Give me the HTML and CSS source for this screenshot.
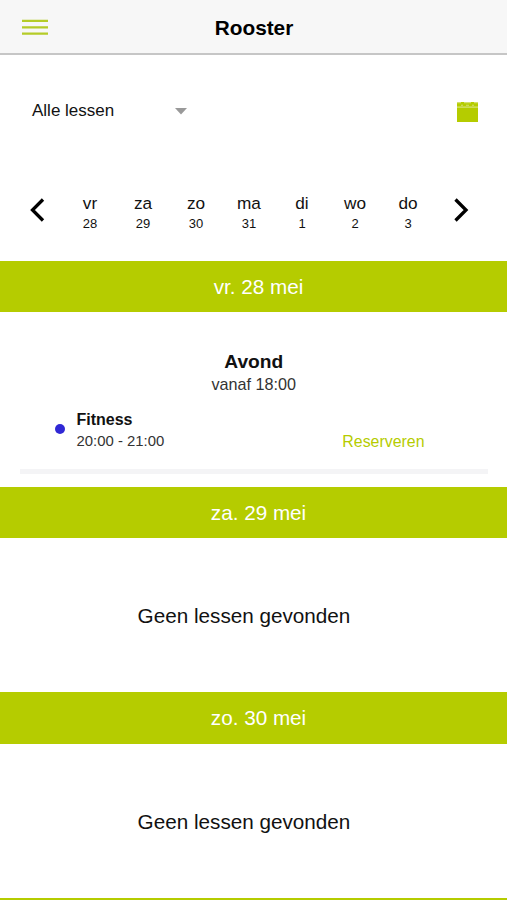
FILE: index.html
```html
<!DOCTYPE html>
<html lang="nl">
<head>
<meta charset="utf-8">
<title>Rooster</title>
<link rel="stylesheet" href="styles.css">
</head>
<body>
<header class="topbar">
  <svg class="menu" width="26" height="17" viewBox="0 0 26 17"><path d="M0 1.9h26M0 8.3h26M0 14.7h26" stroke="#b5cc28" stroke-width="2.2"/></svg>
  <h1>Rooster</h1>
</header>
<div class="filter">
  <span class="filter-label">Alle lessen</span>
  <svg class="caret" width="12" height="7" viewBox="0 0 12 7"><path d="M0 0h12L6 6.5z" fill="#999"/></svg>
  <svg class="calendar" width="21" height="20" viewBox="0 0 21 20"><path d="M0 0h21v20H0z" fill="#b5cc00"/><path d="M0 5.1h21" stroke="#dce68a" stroke-width="1.1"/><path d="M0 .6h4M7 .6h7M17 .6h4M4 3.2h2M9 3.2h3M15 3.2h2" stroke="#d3df70" stroke-width="1.1"/></svg>
</div>
<nav class="week">
  <svg class="arrow" width="16" height="24" viewBox="0 0 16 24"><path d="M14 1.5L3.500 12 14 22.500" fill="none" stroke="#000" stroke-width="3.300"/></svg>
  <div class="days">
    <div class="day"><span>vr</span><small>28</small></div>
    <div class="day"><span>za</span><small>29</small></div>
    <div class="day"><span>zo</span><small>30</small></div>
    <div class="day"><span>ma</span><small>31</small></div>
    <div class="day"><span>di</span><small>1</small></div>
    <div class="day"><span>wo</span><small>2</small></div>
    <div class="day"><span>do</span><small>3</small></div>
  </div>
  <svg class="arrow" width="16" height="24" viewBox="0 0 16 24"><path d="M2.500 1.500L13 12 2.500 22.500" fill="none" stroke="#000" stroke-width="3.300"/></svg>
</nav>
<main>
  <h2 class="date">vr. 28 mei</h2>
  <section class="lessons">
    <h3>Avond</h3>
    <p class="from">vanaf 18:00</p>
    <div class="lesson">
      <span class="dot"></span>
      <div class="info"><strong>Fitness</strong><span>20:00 - 21:00</span></div>
      <a class="reserve">Reserveren</a>
    </div>
  </section>
  <h2 class="date">za. 29 mei</h2>
  <p class="empty">Geen lessen gevonden</p>
  <h2 class="date">zo. 30 mei</h2>
  <p class="empty">Geen lessen gevonden</p>
  <div class="next-date"></div>
</main>
</body>
</html>
```
FILE: styles.css
```css
* { box-sizing: border-box; margin: 0; padding: 0; }
body {
  height: 900px;
  overflow: hidden;
  background: #fff;
  color: #111;
  font-family: "Liberation Sans", Arial, sans-serif;
}
.topbar {
  display: grid;
  grid-template-columns: 48px 1fr 48px;
  align-items: center;
  height: 55px;
  background: #f7f7f7;
  border-bottom: 2px solid #c6c6c6;
}
.menu { margin: 2px 0 0 22px; }
.topbar h1 { padding: 2px 0 0 1px; text-align: center; font-size: 20.8px; line-height: 24px; color: #000; }
.filter { display: flex; align-items: center; height: 112px; padding: 0 29px 0 32px; }
.filter-label { width: 142px; font-size: 17px; line-height: 20px; }
.caret { margin-left: 0.5px; }
.calendar { margin-left: auto; margin-top: 2px; }
.week { display: flex; justify-content: space-between; height: 94px; padding: 25px 38px 0 29px; }
.arrow { margin-top: 6px; }
.days { display: grid; grid-template-columns: repeat(7, 53px); }
.day { text-align: center; }
.day span { display: block; font-size: 17.2px; line-height: 22px; }
.day small { display: block; font-size: 13px; line-height: 20px; }
.date {
  height: 51.3px;
  background: #b5cc00;
  color: #fff;
  text-align: center;
  font-weight: 400;
  font-size: 20.7px;
  line-height: 52px;
  padding-left: 10px;
}
.lessons { height: 174.7px; padding: 38px 19.5px 0 20px; text-align: center; }
.lessons h3 { font-size: 19.2px; line-height: 24px; }
.from { font-size: 16.2px; line-height: 20px; color: #333; }
.lesson {
  display: flex;
  height: 80px;
  padding: 15px 63px 0 34.5px;
  border-bottom: 5px solid #f4f4f6;
  text-align: left;
}
.dot { width: 10px; height: 10px; margin: 15px 12px 0 0; border-radius: 50%; background: #3028d5; }
.info strong { display: block; font-size: 16px; line-height: 21px; }
.info span { display: block; font-size: 14.9px; line-height: 22px; color: #333; }
.reserve { margin: 22px 0 0 auto; font-size: 15.9px; line-height: 21px; color: #b5cc00; }
.empty { height: 154.2px; text-align: center; font-size: 20.7px; line-height: 155px; padding-right: 19px; }
.next-date { height: 2px; background: #b5cc00; }
```
